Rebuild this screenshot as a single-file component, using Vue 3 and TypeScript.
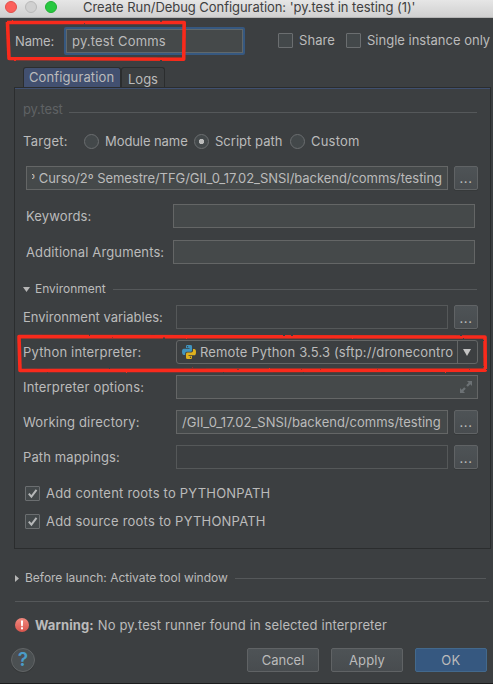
<script setup lang="ts">
import { ref } from 'vue'

interface Target { label: string; cls: string; selected: boolean }

const targets = ref<Target[]>([
  { label: 'Module name', cls: 'module', selected: false },
  { label: 'Script path', cls: 'script', selected: true },
  { label: 'Custom', cls: 'custom', selected: false },
])
const roots = ref([
  { label: 'Add content roots to PYTHONPATH', checked: true },
  { label: 'Add source roots to PYTHONPATH', checked: true },
])
</script>

<template>
  <div class="window">
    <header class="titlebar">
      <i class="light red"></i><i class="light gray"></i><i class="light green"></i>
      <span class="title">Create Run/Debug Configuration: 'py.test in testing (1)'</span>
    </header>

    <div class="name-row">
      <span class="name-label">Name:</span>
      <div class="name-input"><span class="ls2">py.test Comms</span></div>
      <div class="options">
        <i class="check"></i><span class="share">Share</span>
        <i class="check"></i><span class="single">Single instance only</span>
      </div>
    </div>

    <nav class="tabs">
      <div class="tab active">Configuration</div>
      <div class="tab"><span class="ls0">Logs</span></div>
    </nav>

    <main class="panel">
      <div class="group"><span class="pytest">py.test</span><hr /></div>

      <div class="targets">
        <span class="target-label">Target:</span>
        <label v-for="t in targets" :key="t.label" class="radio" :class="t.cls">
          <i class="dot" :class="{ on: t.selected }"></i><span>{{ t.label }}</span>
        </label>
      </div>

      <div class="row path">
        <div class="input"><div class="clip"><span>º Curso/2º Semestre/TFG/GII_0_17.02_SNSI/backend/comms/testing</span></div></div>
        <button class="more"><span>...</span></button>
      </div>
      <div class="row words"><span class="label">Keywords:</span><div class="input"></div></div>
      <div class="row args"><span class="label">Additional Arguments:</span><div class="input"></div></div>

      <div class="group env">
        <svg width="7" height="5" viewBox="0 0 7 5"><path d="M0 0H7L3.5 5Z" fill="#b6b6b6" /></svg>
        <span class="small">Environment</span><hr />
      </div>

      <div class="row"><span class="label ls0">Environment variables:</span><div class="input off"></div><button class="more low"><span>...</span></button></div>
      <div class="row">
        <span class="label ls2">Python interpreter:</span>
        <div class="combo">
          <svg class="python" width="14" height="14" viewBox="0 0 14 14">
            <path d="M7 0H5.2Q4 0 4 1.3V3H7.5V3.7H1.8Q0 3.7 0 6.8T1.8 10H3.2V8.3Q3.2 6.8 4.7 6.8H8.5Q10 6.8 10 5.4V1.3Q10 0 8.5 0Z" fill="#4193bd" />
            <path d="M7 14H8.8Q10 14 10 12.7V11H6.5V10.3H12.2Q14 10.3 14 7.2T12.2 4H11V5.8Q11 7.5 9.3 7.5H5.6Q4 7.5 4 8.9V12.7Q4 14 5.5 14Z" fill="#dfb21f" />
            <circle cx="5.6" cy="1.7" r=".7" fill="#2e4450" /><circle cx="8.5" cy="12.3" r=".7" fill="#4a431f" />
          </svg>
          <span class="combo-text">Remote Python 3.5.3 (sftp://dronecontro</span>
          <div class="arrow"><svg width="8" height="7" viewBox="0 0 8 7"><path d="M0 0H8L4 7Z" fill="#c4c4c4" /></svg></div>
        </div>
      </div>
      <div class="row">
        <span class="label ls2">Interpreter options:</span>
        <div class="input expand">
          <svg width="12" height="12" viewBox="0 0 12 12" fill="#6c7174"><path d="M7 0H12V5L10.3 3.3 7.8 5.8 6.2 4.2 8.7 1.7Z" /><path d="M0 7V12H5L3.3 10.3 5.8 7.8 4.2 6.2 1.7 8.7Z" /></svg>
        </div>
      </div>
      <div class="row">
        <span class="label ls2">Working directory:</span>
        <div class="input dir"><span class="ls0">/GII_0_17.02_SNSI/backend/comms/testing</span></div>
        <button class="more"><span>...</span></button>
      </div>
      <div class="row"><span class="label">Path mappings:</span><div class="input off"></div><button class="more low"><span>...</span></button></div>

      <div class="roots">
        <label v-for="r in roots" :key="r.label">
          <i class="check"><svg v-if="r.checked" width="13" height="13" viewBox="0 0 13 13"><path d="M2.8 6.6L5.4 9.6 10.5 2.9" fill="none" stroke="#b5b7b8" stroke-width="2" /></svg></i>
          <span>{{ r.label }}</span>
        </label>
      </div>
    </main>

    <div class="before">
      <svg width="4" height="7" viewBox="0 0 4 7"><path d="M0 0L4 3.5 0 7Z" fill="#b6b6b6" /></svg>
      <span class="small">Before launch: Activate tool window</span><hr />
    </div>

    <div class="warning">
      <svg width="14" height="14" viewBox="0 0 14 14">
        <defs><linearGradient id="warn" x2="0" y2="1"><stop stop-color="#f1897f" /><stop offset="1" stop-color="#d9544c" /></linearGradient></defs>
        <circle cx="7" cy="7" r="7" fill="url(#warn)" /><path d="M5.9 2.5H8.1L7.8 8.2H6.2Z" fill="#fff" /><rect x="6" y="9.3" width="2" height="2" fill="#fff" />
      </svg>
      <b>Warning:</b><span>No py.test runner found in selected interpreter</span>
    </div>

    <footer class="footer">
      <button class="help">?</button>
      <button class="btn ls0">Cancel</button>
      <button class="btn">Apply</button>
      <button class="btn ok">OK</button>
    </footer>

    <svg class="marks" width="493" height="684" viewBox="0 0 493 684">
      <defs><filter id="rough" filterUnits="userSpaceOnUse" x="0" y="0" width="493" height="684"><feTurbulence type="fractalNoise" baseFrequency=".35" numOctaves="1" seed="4" /><feDisplacementMap in="SourceGraphic" scale="2" xChannelSelector="R" yChannelSelector="G" /><feGaussianBlur stdDeviation=".35" /></filter></defs>
      <g fill="none" stroke="#f92a1a" stroke-width="3.6" stroke-linejoin="round" filter="url(#rough)">
        <path d="M7.5 22.5L184.2 22.5 183.7 59.3 9 58.5Z" /><path d="M19 336.5L485 337 485.3 370.3 20 370.5Z" />
      </g>
    </svg>
  </div>
</template>

<style>
body { margin: 0; background: #3c3f41; }
</style>

<style scoped>
* { box-sizing: border-box; }
.window { position: relative; width: 493px; height: 684px; overflow: hidden; background: #3c3f41; color: #bbb; font: 13px/16px Inter, "Liberation Sans", sans-serif; letter-spacing: .12px; white-space: nowrap; border-bottom: 1px solid #1c1d1e; display: flex; flex-direction: column; }
i { display: block; flex: none; }
svg { display: block; flex: none; }
hr { flex: 1; border: 0; height: 1px; margin: 0; background: #55585a; }
button { flex: none; font: inherit; letter-spacing: inherit; color: inherit; padding: 0; }
.ls0 { letter-spacing: 0; }
.ls2 { letter-spacing: .17px; }
.small { font-size: 12px; letter-spacing: -.02px; }
.titlebar { flex: none; height: 18px; display: flex; align-items: flex-start; padding: 1px 0 0 5px; gap: 8px; background: linear-gradient(#e6e6e6, #d0d0d0); border-bottom: 1px solid #b5b5b5; color: #404040; letter-spacing: -.05px; }
.light { width: 12px; height: 12px; border-radius: 50%; border: 1px solid; }
.red { background: #fc605b; border-color: #e2504b; }
.gray { background: #d0d0d0; border-color: #b9b9b9; }
.green { background: #28c840; border-color: #1faf32; }
.title { margin: -2px 0 0 18px; }
.name-row { flex: none; height: 28px; margin-top: 9px; padding-left: 15px; display: flex; align-items: center; }
.name-label { width: 49px; letter-spacing: -.15px; }
.name-input { width: 181px; height: 28px; border: 2px solid #365880; background: #45494a; box-shadow: inset 0 0 0 1px #5f686c; display: flex; align-items: center; padding-left: 6px; border-radius: 2px; }
.options { display: flex; align-items: center; margin: 0 0 2px 33px; height: 16px; }
.share { width: 47px; letter-spacing: .05px; }
.single { letter-spacing: 0; }
.options .check { margin: 1px 6px 0 0; }
.check { width: 15px; height: 15px; border: 1px solid #6b6e70; border-radius: 1px; background: #43484a; }
.tabs { flex: none; display: flex; align-items: flex-end; margin: 12px 0 0 23px; height: 20px; }
.tab { height: 20px; border: 1px solid #2b2d2e; border-bottom: 0; border-radius: 3px 3px 0 0; padding: 3px 6px 0; }
.tab.active { width: 98px; background: #425070; padding: 1px 0 0 5px; }
.panel { flex: none; margin-left: 14px; width: 477px; height: 462px; border: 1px solid #2b2d2e; box-shadow: inset 0 1px #405070; padding: 13px 0 0 8px; }
.group { display: flex; align-items: center; height: 16px; width: 454px; }
.group hr { margin-top: 6px; }
.pytest { color: #5f6264; width: 46px; letter-spacing: -.2px; }
.targets { display: flex; align-items: center; margin-top: 16px; height: 16px; }
.target-label { width: 61px; letter-spacing: .25px; }
.radio { display: flex; align-items: center; gap: 6px; }
.module { width: 110px; letter-spacing: -.08px; }
.script { width: 96px; letter-spacing: .02px; }
.custom { letter-spacing: .22px; }
.dot { width: 15px; height: 15px; border: 1px solid #6b6e70; border-radius: 50%; background: #43484a; }
.dot.on { background: radial-gradient(circle, #bbb 2.3px, #43484a 3px); }
.row { display: flex; align-items: center; height: 24px; margin-bottom: 11px; }
.label { width: 153px; }
.input { width: 272px; height: 24px; border: 1px solid #646666; background: #45494a; display: flex; align-items: center; }
.input.off { background: transparent; border-color: #555859; }
.more { width: 24px; height: 24px; margin-left: 6px; border: 1px solid #606365; border-radius: 2px; background: linear-gradient(#4e5356, #484c4f); box-shadow: 0 1px #36393a; letter-spacing: .6px; }
.more.low span { position: relative; top: 1px; }
.path { margin: 17px 0 14px 3px; }
.path .input { width: 422px; padding-left: 5px; }
.clip { width: 410px; overflow: hidden; display: flex; justify-content: flex-end; letter-spacing: -.05px; }
.clip span { flex: none; }
.words { margin: 0 0 12px 3px; }
.args { margin: 0 0 17px 3px; }
.words .label, .args .label { width: 147px; }
.words .input, .args .input { width: 302px; }
.env { margin-bottom: 8px; }
.env .small { margin: 0 7px 0 5px; }
.env hr { margin-top: 1px; }
.combo { width: 302px; height: 24px; border: 1px solid #646666; border-radius: 3px; display: flex; align-items: center; padding-left: 5px; }
.combo-text { margin-left: 4px; width: 257px; letter-spacing: .14px; }
.arrow { flex: 1; height: 22px; border-left: 1px solid #646666; display: flex; align-items: center; justify-content: center; padding-right: 1px; }
.expand { width: 302px; justify-content: flex-end; padding-right: 5px; }
.dir { padding-left: 5px; }
.roots { margin: 16px 0 0 2px; }
.roots label { display: flex; align-items: center; gap: 6px; height: 16px; margin-bottom: 12px; letter-spacing: .22px; }
.before { flex: none; display: flex; align-items: center; height: 16px; margin: 21px 7px 0 15px; }
.before .small { margin: 0 7px 0 6px; }
.before hr { margin-top: 1px; }
.warning { flex: none; margin: 15px 4px 0 15px; border-top: 1px solid #55585a; padding-top: 15px; display: flex; align-items: center; height: 32px; letter-spacing: .11px; }
.warning b { margin: 0 4px 0 6px; }
.footer { flex: none; display: flex; align-items: center; height: 24px; margin: 15px 0 0 11px; }
.help { width: 24px; height: 24px; border-radius: 50%; border: 1px solid #626567; background: #4b5052; box-shadow: 0 1px #36393a; color: #4a9cc9; font-size: 19px; font-weight: 600; line-height: 22px; margin-right: 212px; }
.btn { width: 72px; height: 24px; border: 1px solid #606365; border-radius: 2px; background: linear-gradient(#4e5356, #484c4f); margin-right: 12px; }
.ok { background: #365880; border-color: #43698c; letter-spacing: .4px; }
.marks { position: absolute; left: 0; top: 0; pointer-events: none; }
</style>
